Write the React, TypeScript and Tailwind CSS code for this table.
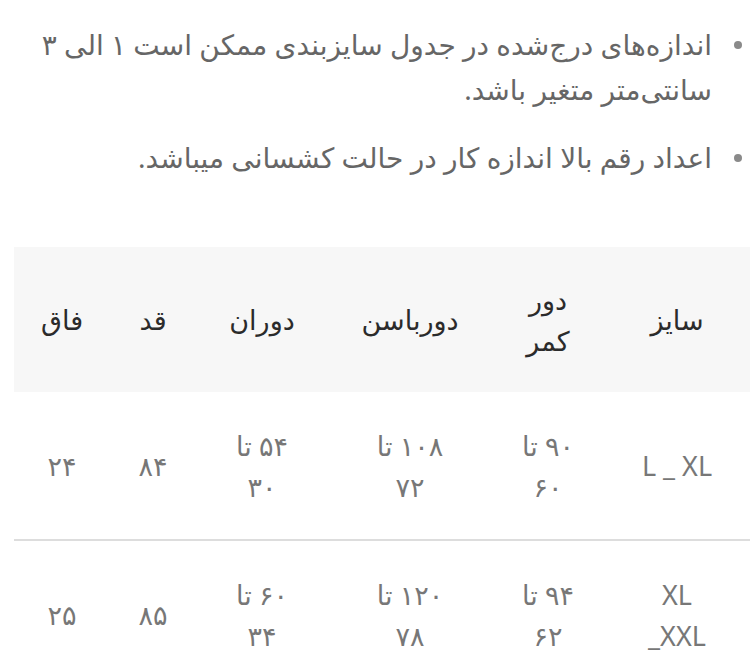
import React from 'react';

const notes: string[][] = [
  ['اندازه‌های درج‌شده در جدول سایزبندی ممکن است ۱ الی ۳', 'سانتی‌متر متغیر باشد.'],
  ['اعداد رقم بالا اندازه کار در حالت کشسانی میباشد.'],
];

const headers: string[][] = [['سایز'], ['دور', 'کمر'], ['دورباسن'], ['دوران'], ['قد'], ['فاق']];

const rows: string[][][] = [
  [['L _ XL'], ['۹۰ تا', '۶۰'], ['۱۰۸ تا', '۷۲'], ['۵۴ تا', '۳۰'], ['۸۴'], ['۲۴']],
  [['XL', 'XXL_'], ['۹۴ تا', '۶۲'], ['۱۲۰ تا', '۷۸'], ['۶۰ تا', '۳۴'], ['۸۵'], ['۲۵']],
];

const Cell: React.FC<{ lines: string[] }> = ({ lines }) => (
  <div className="flex flex-col items-center justify-center text-center leading-[41px]">
    {lines.map((l, i) => (
      <span key={i} className="whitespace-nowrap">{l}</span>
    ))}
  </div>
);

const App: React.FC = () => {
  return (
    <div
      dir="rtl"
      className="w-[750px] h-[670px] overflow-hidden bg-white"
      style={{ fontFamily: '"Noto Sans", "DejaVu Sans", sans-serif' }}
    >
      <ul className="pt-[22px] pr-[8px] flex flex-col gap-[23px] text-[28px] text-[#666666]">
        {notes.map((lines, i) => (
          <li key={i} className="flex items-start gap-[22px]">
            <span className="mt-[19px] w-[8px] h-[8px] rounded-full bg-[#8a8a8a] shrink-0" />
            <div className="leading-[45px]">
              {lines.map((l, j) => (
                <div key={j} className="whitespace-nowrap">{l}</div>
              ))}
            </div>
          </li>
        ))}
      </ul>

      <div className="mt-[67px] ml-[14px] text-[27px]">
        <div className="grid grid-cols-[146px_112px_164px_132px_86px_96px] h-[145px] bg-[#f7f7f7] text-[#2b2b2b]">
          {headers.map((h, i) => (
            <Cell key={i} lines={h} />
          ))}
        </div>
        {rows.map((r, i) => (
          <div
            key={i}
            className={
              'grid grid-cols-[146px_112px_164px_132px_86px_96px] text-[#777777] ' +
              (i === 0 ? 'h-[149px] border-b-2 border-[#dddddd]' : 'h-[147px]')
            }
          >
            {r.map((c, j) => (
              <Cell key={j} lines={c} />
            ))}
          </div>
        ))}
      </div>
    </div>
  );
};

export default App;
